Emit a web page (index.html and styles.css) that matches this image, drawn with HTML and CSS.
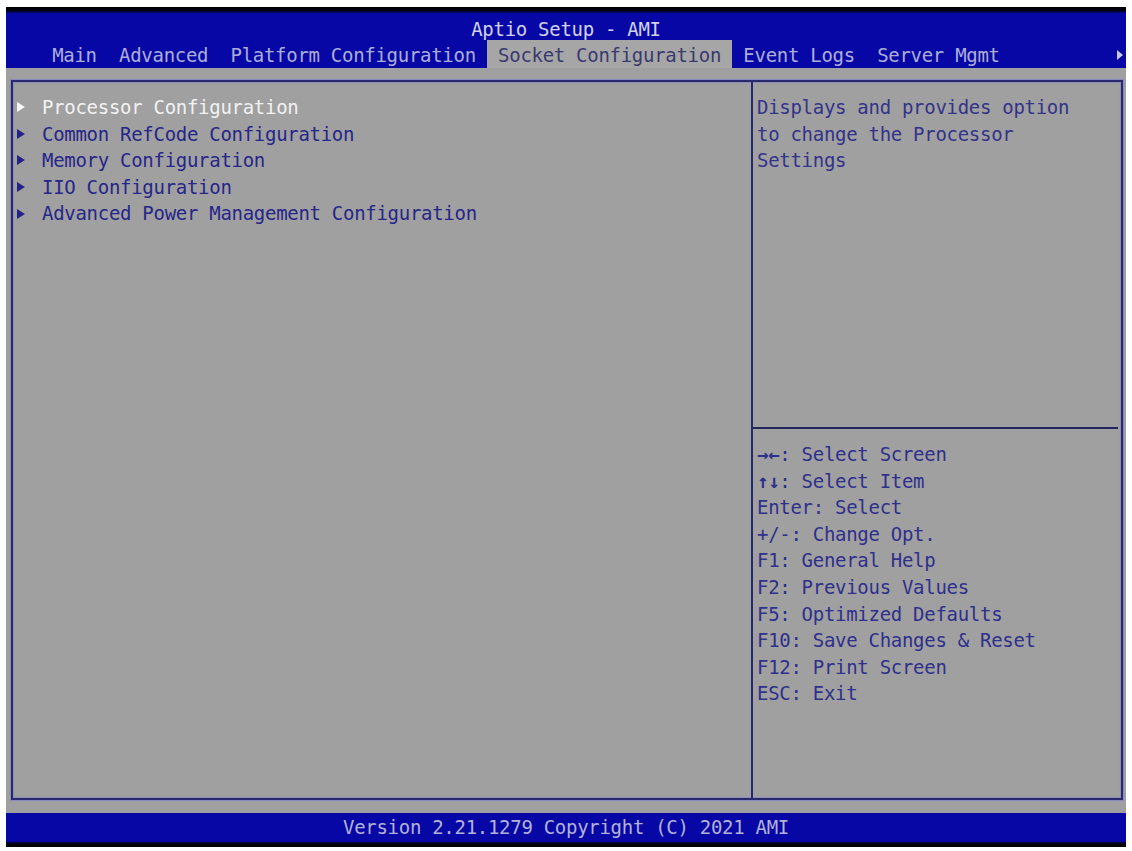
FILE: index.html
```html
<!DOCTYPE html>
<html lang="en">
<head>
<meta charset="utf-8">
<title>Aptio Setup - AMI</title>
<link rel="stylesheet" href="styles.css">
</head>
<body>
<div class="screen">
  <div class="topband"></div>
  <header class="header">
    <div class="title">Aptio Setup - AMI</div>
    <nav class="tabs">
      <span class="tab">Main</span>
      <span class="tab">Advanced</span>
      <span class="tab">Platform Configuration</span>
      <span class="tab active">Socket Configuration</span>
      <span class="tab">Event Logs</span>
      <span class="tab">Server Mgmt</span>
      <svg class="more" width="6" height="10" viewBox="0 0 6 10"><polygon points="0,0 6,5 0,10" fill="#c8c8e4"/></svg>
    </nav>
  </header>
  <main class="body">
    <div class="frame">
      <section class="menu">
        <div class="item selected"><svg class="tri" width="8" height="10" viewBox="0 0 8 10"><polygon points="0,0 8,5 0,10"/></svg><span>Processor Configuration</span></div>
        <div class="item"><svg class="tri" width="8" height="10" viewBox="0 0 8 10"><polygon points="0,0 8,5 0,10"/></svg><span>Common RefCode Configuration</span></div>
        <div class="item"><svg class="tri" width="8" height="10" viewBox="0 0 8 10"><polygon points="0,0 8,5 0,10"/></svg><span>Memory Configuration</span></div>
        <div class="item"><svg class="tri" width="8" height="10" viewBox="0 0 8 10"><polygon points="0,0 8,5 0,10"/></svg><span>IIO Configuration</span></div>
        <div class="item"><svg class="tri" width="8" height="10" viewBox="0 0 8 10"><polygon points="0,0 8,5 0,10"/></svg><span>Advanced Power Management Configuration</span></div>
      </section>
      <aside class="side">
        <div class="help">
          <div class="line">Displays and provides option</div>
          <div class="line">to change the Processor</div>
          <div class="line">Settings</div>
        </div>
        <div class="rule"></div>
        <div class="legend">
          <div class="line"><span class="keys">→←</span>: Select Screen</div>
          <div class="line"><span class="keys">↑↓</span>: Select Item</div>
          <div class="line">Enter: Select</div>
          <div class="line">+/-: Change Opt.</div>
          <div class="line">F1: General Help</div>
          <div class="line">F2: Previous Values</div>
          <div class="line">F5: Optimized Defaults</div>
          <div class="line">F10: Save Changes &amp; Reset</div>
          <div class="line">F12: Print Screen</div>
          <div class="line">ESC: Exit</div>
        </div>
      </aside>
    </div>
  </main>
  <footer class="footer">Version 2.21.1279 Copyright (C) 2021 AMI</footer>
  <div class="bottomband"></div>
</div>
</body>
</html>
```
FILE: styles.css
```css
html, body {
  margin: 0;
  padding: 0;
  background: #ffffff;
}

.screen {
  margin: 7px 6px 0 6px;
  width: 1120px;
  display: flex;
  flex-direction: column;
  font-family: "DejaVu Sans Mono", "Liberation Mono", monospace;
  font-size: 19px;
  letter-spacing: -0.29px;
}

.topband {
  height: 6px;
  background: linear-gradient(#000000 0%, #020214 60%, #06067a 100%);
}

.header {
  background: #0707a6;
  height: 55px;
  display: flex;
  flex-direction: column;
}

.title {
  height: 27px;
  box-sizing: border-box;
  padding-top: 5px;
  line-height: 22px;
  text-align: center;
  color: #d2d2ee;
}

.tabs {
  height: 28px;
  display: flex;
  align-items: stretch;
  padding-left: 35px;
}

.tab {
  padding: 0 11.15px;
  line-height: 30px;
  color: #acaed8;
  white-space: pre;
}

.tab.active {
  background: #a6a6a6;
  color: #3a3a70;
}

.more {
  margin-left: auto;
  margin-right: 3px;
  align-self: center;
  margin-top: 2px;
}

.body {
  background: #a0a0a0;
  height: 745px;
  box-sizing: border-box;
  padding: 12px 3px 13px 5px;
  display: flex;
}

.frame {
  flex: 1;
  border: 2px solid #28286e;
  box-shadow: 0 0 1px 1px rgba(120, 120, 210, 0.55), inset 0 0 1px 1px rgba(120, 120, 210, 0.45);
  display: flex;
}

.menu {
  width: 738px;
  border-right: 2px solid #28286e;
  padding-top: 12px;
}

.item {
  display: flex;
  align-items: center;
  height: 26.6px;
  line-height: 26.6px;
  color: #26268a;
  white-space: pre;
}

.item .tri {
  margin-left: 4px;
  margin-right: 17px;
  fill: #22228a;
}

.item.selected {
  color: #f2f2f2;
}

.item.selected .tri {
  fill: #f6f6f6;
}

.side {
  flex: 1;
  display: flex;
  flex-direction: column;
}

.help {
  height: 345px;
  box-sizing: border-box;
  padding: 12px 4px 0 4px;
  color: #33338a;
}

.rule {
  height: 2px;
  background: #24245e;
  margin-right: 3px;
}

.legend {
  padding: 12px 4px 0 4px;
  color: #2f2f8c;
}

.line {
  height: 26.6px;
  line-height: 26.6px;
  white-space: pre;
}

.keys {
  font-weight: bold;
}

.footer {
  height: 29px;
  line-height: 29px;
  background: #0707a6;
  color: #b2b2d8;
  text-align: center;
}

.bottomband {
  height: 5px;
  background: linear-gradient(#04044a 0%, #000000 50%, #000000 100%);
}
```
